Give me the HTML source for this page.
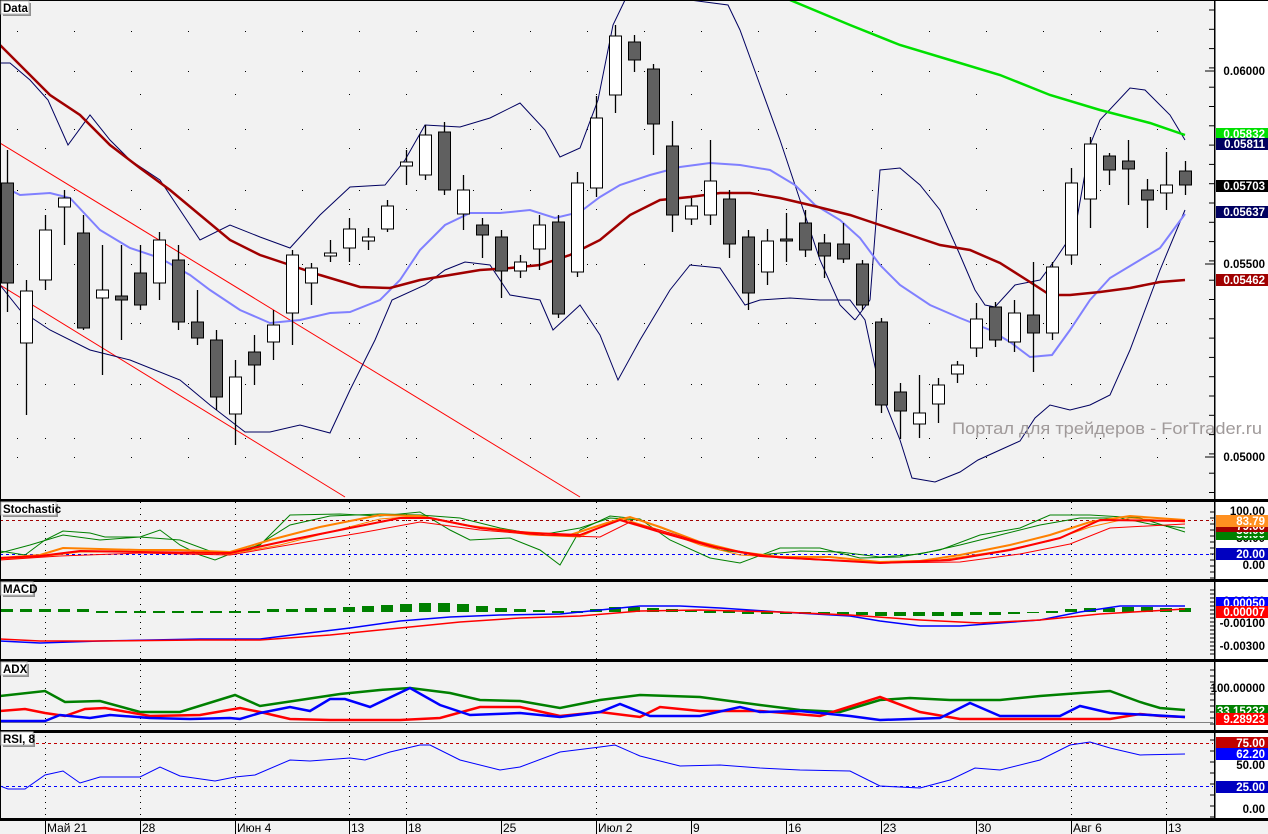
<!DOCTYPE html>
<html><head><meta charset="utf-8"><style>
html,body{margin:0;padding:0;background:#fff;}
svg{display:block;font-family:"Liberation Sans",sans-serif;}
.lbl{font-family:"Liberation Sans",sans-serif;font-weight:bold;font-size:11.5px;}
</style></head><body>
<svg id="c" width="1268" height="834" viewBox="0 0 1268 834" xmlns="http://www.w3.org/2000/svg"></svg>
<script>
var s='';
function P(pts,col,w,extra){return '<polyline fill="none" stroke="'+col+'" stroke-width="'+w+'" points="'+pts.map(function(p){return p.join(',')}).join(' ')+'" '+(extra||'')+'/>';}
s+='<rect x="0" y="0" width="1268" height="834" fill="#f2f2f2"/>';
s+='<rect x="1215" y="0" width="53" height="834" fill="#fff"/>';
s+='<rect x="0" y="820" width="1268" height="14" fill="#f2f2f2"/>';
var vx=[45,140,235,349,406,501,596,691,786,881,976,1071,1166];
var mainH=[94,148,209,264,323,384,438];
for(var i=0;i<vx.length;i++){for(var j=0;j<mainH.length;j++){s+='<rect x="'+vx[i]+'" y="'+mainH[j]+'" width="1" height="1" fill="#000"/>';}}
[31,71,129,190,264,323,384,438,457].forEach(function(y){for(var x=17;x<1213;x+=19){ if(x%57<19) s+='<rect x="'+x+'" y="'+y+'" width="1" height="1" fill="#000"/>';}});
[45,140,235,349,406,596,1071,1166].forEach(function(x){s+='<line x1="'+(x+.5)+'" y1="502" x2="'+(x+.5)+'" y2="818" stroke="#000" stroke-width="1" stroke-dasharray="1,5"/>';});
s+='<line x1="0" y1="143" x2="580" y2="497" stroke="#ff0000" stroke-width="1"/>';
s+='<line x1="0" y1="285" x2="345" y2="497" stroke="#ff0000" stroke-width="1"/>';
s+=P([[0,63],[10,63],[30,80],[48,100],[68,145],[90,115],[110,140],[130,160],[160,180],[200,240],[230,225],[260,237],[290,248],[320,215],[350,187],[385,185],[405,160],[425,125],[460,127],[490,118],[520,103],[545,130],[560,157],[580,148],[598,100],[613,25],[625,0]],'#000060',1);
s+=P([[690,0],[728,5],[740,30],[760,85],[780,140],[800,200],[820,260],[840,305],[855,320]],'#000060',1);
s+=P([[855,320],[870,300],[880,170],[900,168],[920,185],[940,210],[960,255],[975,290],[985,305],[995,307],[1015,285],[1040,280],[1055,260],[1075,230],[1090,145],[1100,120],[1130,88],[1145,90],[1170,115],[1185,140]],'#000060',1);
s+=P([[0,285],[20,310],[50,330],[90,350],[130,360],[180,380],[210,405],[245,432],[270,432],[300,425],[330,433],[350,390],[375,340],[392,300],[425,285],[445,270],[465,262],[490,265],[510,295],[540,300],[553,330],[580,305],[600,335],[618,380],[640,340],[670,290],[690,265],[720,268],[745,305],[760,300],[790,298],[820,300],[850,300],[865,320],[880,390],[900,440],[912,478],[935,482],[960,472],[978,460],[1000,450],[1020,441],[1035,418],[1050,405],[1070,410],[1090,405],[1110,395],[1130,350],[1160,270],[1185,210]],'#000060',1);
s+=P([[0,185],[20,195],[50,193],[70,198],[100,230],[130,248],[160,258],[190,275],[210,290],[240,310],[270,323],[300,320],[330,313],[350,312],[380,300],[400,280],[420,250],[445,225],[470,213],[500,213],[530,210],[555,218],[580,212],[600,197],[620,185],[650,175],[680,167],[710,163],[740,165],[770,170],[795,185],[815,205],[840,220],[860,238],[880,265],[900,285],[930,305],[960,318],[990,330],[1010,342],[1030,357],[1052,355],[1070,330],[1090,300],[1110,278],[1140,260],[1160,248],[1185,214]],'#8080ff',2);
s+=P([[0,45],[20,65],[50,95],[80,115],[110,145],[140,168],[170,190],[200,215],[230,240],[260,255],[290,265],[320,275],[360,287],[390,288],[420,280],[450,275],[480,270],[510,268],[540,265],[570,255],[600,240],[630,215],[660,200],[690,197],[720,193],[750,193],[780,198],[810,205],[850,215],[880,225],[910,235],[940,245],[970,250],[1000,263],[1030,282],[1050,295],[1070,295],[1100,292],[1130,288],[1160,282],[1185,280]],'#a00000',2.5);
s+=P([[790,0],[850,25],[900,45],[950,60],[1000,75],[1050,95],[1100,110],[1150,123],[1185,135]],'#00e000',2.5);
var C=[[183,283,150,312,1],[291,343,280,415,0],[230,280,215,290,0],[198,207,190,245,0],[233,328,215,330,1],[290,298,245,375,0],[296,300,245,340,1],[273,305,245,310,1],[240,283,232,300,0],[260,322,245,330,1],[322,338,290,345,1],[340,397,330,410,1],[377,414,360,445,0],[352,365,335,385,1],[325,342,310,360,0],[255,313,250,345,0],[268,283,263,305,0],[253,256,240,262,0],[229,248,218,262,0],[237,241,228,250,0],[206,229,200,232,0],[162,166,150,185,0],[135,175,125,180,0],[132,190,122,195,1],[190,214,175,230,0],[225,235,218,258,1],[237,271,230,298,1],[262,271,255,278,0],[225,249,215,270,0],[222,314,215,318,1],[183,272,172,277,0],[118,188,96,197,0],[36,95,25,113,0],[42,60,35,72,1],[69,124,64,155,1],[146,215,121,232,1],[206,219,198,225,0],[181,215,140,225,0],[199,244,190,258,1],[237,293,230,310,1],[241,272,229,285,0],[239,241,213,262,1],[223,250,210,257,1],[243,256,234,278,1],[244,259,223,263,1],[264,305,260,310,1],[322,405,318,413,1],[392,411,383,439,1],[413,424,375,438,0],[385,404,378,423,0],[365,374,361,383,0],[319,348,303,357,0],[307,340,302,347,1],[313,342,300,352,0],[315,333,262,372,1],[267,333,262,340,0],[183,255,168,264,0],[144,199,137,228,0],[156,170,153,185,1],[161,169,140,205,1],[190,200,179,228,1],[185,193,152,210,0],[171,185,161,195,1]];
for(var i=0;i<C.length;i++){var c=C[i],x=7+i*19;
 s+='<line x1="'+(x+.5)+'" y1="'+c[2]+'" x2="'+(x+.5)+'" y2="'+c[3]+'" stroke="#000" stroke-width="1.3"/>';
 var h=Math.max(c[1]-c[0],2);
 s+='<rect x="'+(x-5.5)+'" y="'+c[0]+'" width="12" height="'+h+'" fill="'+(c[4]?'#606060':'#fff')+'" stroke="#000" stroke-width="1"/>';}
s+='<text x="952" y="434" font-size="17" fill="#a09a9a" textLength="310" lengthAdjust="spacingAndGlyphs">Портал для трейдеров - ForTrader.ru</text>';
s+='<line x1="0" y1="520.5" x2="1213" y2="520.5" stroke="#a00000" stroke-dasharray="3,3"/>';
s+='<line x1="0" y1="554.5" x2="1213" y2="554.5" stroke="#0000ff" stroke-dasharray="3,3"/>';
s+=P([[0,551],[25,555],[45,540],[63,531],[90,533],[105,537],[140,537],[160,530],[180,545],[200,555],[215,560],[235,552],[260,545],[290,515],[340,514],[380,516],[420,512],[450,530],[470,540],[510,538],[540,550],[560,565],[580,530],[610,516],[640,519],[670,540],[710,558],[740,563],[780,548],[820,548],[860,558],[900,557],[940,550],[980,535],[1020,528],[1050,515],[1090,515],[1140,518],[1185,532]],'#008000',1);
s+=P([[0,553],[30,545],[63,535],[100,540],[140,537],[180,540],[215,553],[250,550],[290,525],[330,516],[380,514],[420,515],[460,518],[500,528],[540,535],[580,528],[610,518],[640,520],[680,535],[720,550],[760,555],[800,551],[840,552],[880,557],[920,554],[960,545],[1000,535],[1040,525],[1080,518],[1120,518],[1150,524],[1185,528]],'#008000',1);
s+=P([[0,558],[40,555],[63,548],[100,549],[140,550],[180,550],[230,552],[270,540],[320,527],[380,515],[420,516],[470,526],[520,532],[570,535],[610,522],[630,517],[660,527],[700,542],[740,552],[780,557],[830,557],[880,562],[920,561],[960,555],[1010,545],[1050,535],[1090,522],[1130,516],[1185,520]],'#ff8000',2);
s+=P([[0,559],[40,557],[80,552],[140,552],[230,554],[280,545],[330,532],[380,519],[420,516],[480,528],[530,535],[580,537],[620,518],[660,530],[700,545],[740,555],[790,558],[880,562],[940,560],[1000,551],[1050,541],[1090,527],[1130,518],[1185,522]],'#ff8000',1);
s+=P([[0,558],[40,556],[80,551],[140,552],[230,553],[290,540],[340,530],[400,518],[430,518],[480,528],[530,533],[580,535],[620,520],[660,532],[710,546],[760,556],[810,559],[880,563],[950,560],[1010,550],[1060,538],[1100,520],[1185,521]],'#ff0000',2);
s+=P([[0,560],[60,556],[140,553],[230,555],[300,543],[360,533],[420,522],[480,530],[540,535],[600,537],[630,522],[670,533],[720,548],[780,558],[880,563],[960,562],[1020,554],[1070,544],[1110,528],[1185,524]],'#ff0000',1);
var hb=[3,3,3,3,3,1,1,1,1,1,1,1,1,1,3,3,4,4,5,6,7,8,9,9,8,6,4,3,2,1,1,3,5,5,4,3,2,1,1,-2,-2,-2,-2,-3,-3,-3,-4,-4,-4,-4,-4,-3,-3,-2,-1,1,3,4,4,5,5,4,4];
for(var i=0;i<hb.length;i++){var x=7+i*19,h=hb[i];
 if(h>0) s+='<rect x="'+(x-6)+'" y="'+(612-h)+'" width="12" height="'+(h<=1?2:h)+'" fill="#008000"/>';
 else s+='<rect x="'+(x-6)+'" y="612" width="12" height="'+(-h)+'" fill="#008000"/>';}
s+=P([[0,641],[40,643],[100,641],[200,639],[260,639],[300,634],[350,628],[400,621],[450,617],[500,615],[560,614],[600,610],[640,606],[680,606],[720,608],[780,612],[850,616],[880,621],[920,626],[960,626],[1000,623],[1040,620],[1080,612],[1120,606],[1185,606]],'#0000ff',1.5);
s+=P([[0,639],[40,641],[100,641],[200,640],[260,640],[330,635],[400,628],[460,622],[520,618],[580,616],[640,611],[700,610],[780,612],[850,615],[920,620],[980,623],[1040,620],[1100,614],[1185,609]],'#ff0000',1.5);
s+='<line x1="0" y1="722.5" x2="1213" y2="722.5" stroke="#808080"/>';
s+=P([[0,696],[45,691],[65,702],[100,701],[140,712],[180,712],[235,695],[260,706],[300,700],[340,694],[380,690],[410,688],[450,693],[480,700],[520,701],[560,708],[600,700],[640,695],[700,697],[760,705],[800,710],[840,712],[880,700],[910,698],[950,700],[1000,700],[1040,696],[1080,693],[1110,691],[1140,702],[1160,708],[1185,710]],'#008000',2.5);
s+=P([[0,711],[25,709],[45,713],[65,716],[85,709],[105,708],[150,716],[200,715],[240,708],[260,712],[290,719],[330,720],[400,720],[440,718],[480,707],[520,707],[560,716],[600,712],[640,717],[660,707],[700,711],[760,711],[820,716],[880,697],[920,712],[960,719],[1060,719],[1110,719],[1140,714],[1160,716],[1185,717]],'#ff0000',2.5);
s+=P([[0,721],[45,721],[60,715],[90,718],[110,715],[150,718],[190,719],[230,718],[240,719],[260,713],[290,707],[310,711],[330,699],[345,699],[370,707],[410,688],[440,705],[470,715],[520,713],[560,717],[600,712],[620,704],[650,716],[700,716],[740,707],[760,712],[800,711],[850,716],[880,720],[940,718],[970,703],[1000,716],[1060,716],[1080,706],[1110,713],[1150,715],[1185,717]],'#0000ff',2.5);
s+='<line x1="0" y1="743.5" x2="1213" y2="743.5" stroke="#c00000" stroke-dasharray="3,3"/>';
s+='<line x1="0" y1="786.5" x2="1213" y2="786.5" stroke="#0000ff" stroke-dasharray="3,3"/>';
s+=P([[0,786],[8,789],[25,789],[45,775],[63,771],[80,783],[100,777],[140,777],[160,767],[180,776],[215,781],[235,777],[255,775],[290,760],[310,761],[350,758],[365,760],[390,752],[420,745],[430,745],[460,760],[500,770],[520,767],[560,752],[600,747],[615,745],[640,756],[680,766],[720,765],[760,768],[800,770],[850,771],[880,786],[920,788],[950,780],[975,768],[1000,770],[1040,760],[1070,745],[1090,742],[1110,748],[1140,755],[1185,754]],'#0000ff',1);
[500,580,660,731,819].forEach(function(y){s+='<rect x="0" y="'+(y-1)+'" width="1268" height="3" fill="#000"/>';});
s+='<rect x="0" y="0" width="1268" height="1" fill="#000"/>';
s+='<rect x="0" y="0" width="1" height="820" fill="#000"/>';
s+='<rect x="1214" y="0" width="1.5" height="820" fill="#000"/>';
function T(x,y,w,t){s+='<rect x="'+(x+2)+'" y="'+(y+2)+'" width="'+w+'" height="13" fill="#909090"/><rect x="'+x+'" y="'+y+'" width="'+w+'" height="13" fill="#fff" stroke="#c0c0c0"/><text class="lbl" x="'+(x+2)+'" y="'+(y+11)+'" font-size="11">'+t+'</text>';}
T(1,1,28,'Data');T(1,502,55,'Stochastic');T(1,582,32,'MACD');T(1,662,26,'ADX');T(1,732,32,'RSI, 8');
for(var y=10;y<500;y+=19.3){s+='<line x1="1209" y1="'+y+'" x2="1214" y2="'+y+'" stroke="#000"/>';}
[71,264,457].forEach(function(y){s+='<line x1="1205" y1="'+y+'" x2="1214" y2="'+y+'" stroke="#000"/>';});
for(var y=512;y<580;y+=6){s+='<line x1="1210" y1="'+y+'" x2="1214" y2="'+y+'" stroke="#000"/>';}
for(var y=590;y<658;y+=4){s+='<line x1="1210" y1="'+y+'" x2="1214" y2="'+y+'" stroke="#000"/>';}
for(var y=670;y<728;y+=6){s+='<line x1="1210" y1="'+y+'" x2="1214" y2="'+y+'" stroke="#000"/>';}
for(var y=740;y<818;y+=11){s+='<line x1="1210" y1="'+y+'" x2="1214" y2="'+y+'" stroke="#000"/>';}
function L(y,t){s+='<text class="lbl" x="1265" y="'+(y+4)+'" text-anchor="end" fill="#000">'+t+'</text>';}
function B(y,bg,t){s+='<rect x="1216" y="'+(y-6)+'" width="52" height="12" fill="'+bg+'"/><text class="lbl" x="1265" y="'+(y+4)+'" text-anchor="end" fill="#fff">'+t+'</text>';}
L(71,'0.06000');L(264,'0.05500');L(457,'0.05000');
B(134,'#00e000','0.05832');B(144,'#000060','0.05811');B(186,'#000','0.05703');B(212,'#000060','0.05637');B(280,'#a00000','0.05462');
L(511,'100.00');L(538,'50.00');B(534,'#008000','50.00');B(530,'#008000','56.00');B(526,'#a00000','79.00');B(521,'#ff9020','83.79');B(554,'#0000c0','20.00');L(565,'0.00');
L(601,'0.00100');B(603,'#0000ff','0.00050');B(612,'#ff0000','0.00007');L(623,'-0.00100');L(646,'-0.00300');
L(688,'100.00000');B(711,'#008000','33.15232');B(719,'#ff0000','9.28923');
B(743,'#c00000','75.00');B(754,'#0000ff','62.20');L(765,'50.00');B(787,'#0000c0','25.00');L(809,'0.00');
var bl=[[45,'Май 21'],[140,'28'],[235,'Июн 4'],[349,'13'],[406,'18'],[501,'25'],[596,'Июл 2'],[691,'9'],[786,'16'],[881,'23'],[976,'30'],[1071,'Авг 6'],[1166,'13']];
bl.forEach(function(b){s+='<line x1="'+(b[0]+.5)+'" y1="820" x2="'+(b[0]+.5)+'" y2="834" stroke="#000"/><text x="'+(b[0]+2)+'" y="832" font-size="12" fill="#000">'+b[1]+'</text>';});
document.getElementById('c').innerHTML=s;
</script>
</body></html>
